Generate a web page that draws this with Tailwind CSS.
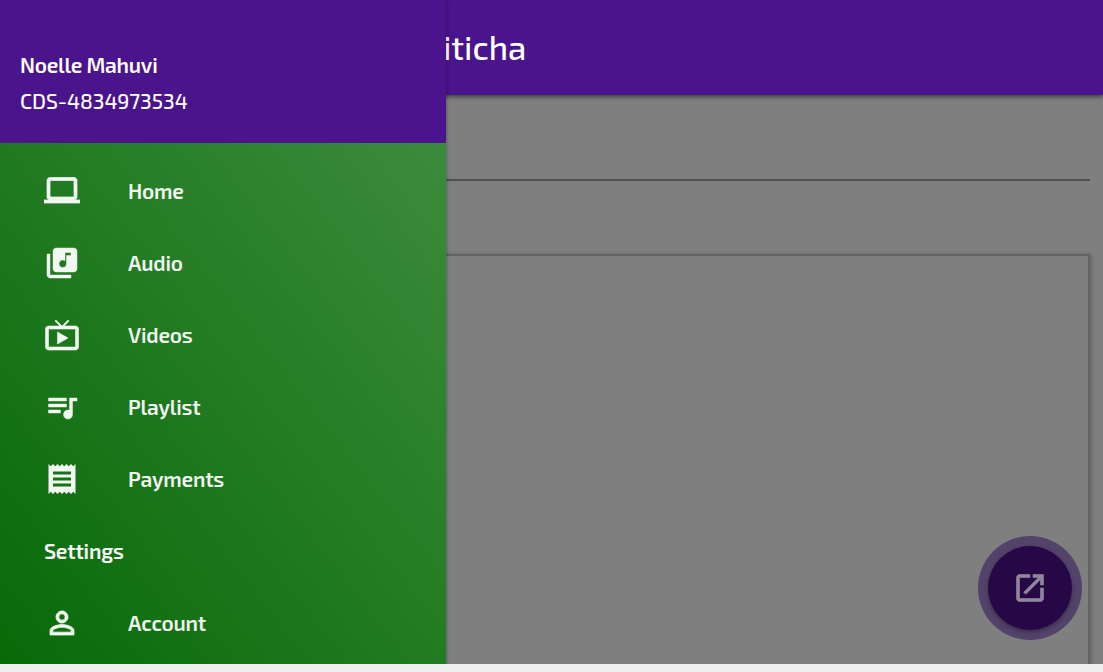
<!DOCTYPE html>
<html lang="en">
<head>
  <meta charset="UTF-8" />
  <title>Miticha</title>
  <meta name="viewport" content="width=device-width, initial-scale=1" />
  <script src="https://cdn.jsdelivr.net/npm/@tailwindcss/browser@4"></script>
</head>
<body class="bg-[#efefef] overflow-hidden font-['Exo_2','Noto_Sans',sans-serif]">

  <div class="relative h-[664px] overflow-hidden bg-[#7f7f7f]">

    <!-- App bar -->
    <header class="relative flex h-[95px] items-center bg-[#4a148c] pl-[443px] shadow-[0_2px_4px_rgba(0,0,0,0.5)]">
      <h1 class="text-[33px] font-medium leading-none text-white">iticha</h1>
    </header>

    <!-- Page content -->
    <main class="pr-[13px]">
      <div class="h-[86px] border-b-2 border-[#505050]"></div>
      <div class="mt-[73px] h-[430px] border-2 border-[#636363] shadow-[1px_1px_4px_rgba(0,0,0,0.3)]"></div>
    </main>

    <!-- Floating button -->
    <button class="absolute left-[978px] top-[536px] flex size-[104px] items-center justify-center rounded-full bg-[#53436a]">
      <span class="flex size-[84px] items-center justify-center rounded-full bg-[#260846] shadow-[0_2px_4px_rgba(0,0,0,0.35)]">
        <svg class="size-9 fill-[#92869f] stroke-[#92869f] stroke-[0.4]" viewBox="0 0 24 24"><path d="M19 19H5V5h7V3H5c-1.11 0-2 .9-2 2v14c0 1.1.89 2 2 2h14c1.1 0 2-.9 2-2v-7h-2v7zM14 3v2h3.59l-9.83 9.83 1.41 1.41L19 6.41V10h2V3h-7z"/></svg>
      </span>
    </button>

    <!-- Side drawer -->
    <aside class="absolute left-0 top-0 flex h-[664px] w-[446px] flex-col bg-[#4a148c] text-[21px] font-semibold leading-[36px] tracking-[-0.2px] text-[#f2f7f2] shadow-[0_0_4px_rgba(0,0,0,0.4)]">
      <div class="h-[143px] shrink-0 pl-5 pt-[47px] text-white">
        <p class="tracking-[-0.25px]">Noelle Mahuvi</p>
        <p class="font-medium tracking-[-0.05px]">CDS-4834973534</p>
      </div>

      <nav class="grow bg-linear-[52deg] from-[#076a07] to-[#3c8b3c] pt-3 pl-11">
        <a class="flex h-[72px] items-center gap-12">
          <svg class="size-9 fill-current stroke-current stroke-[0.5]" viewBox="0 0 24 24"><path d="M20 18c1.1 0 1.99-.9 1.99-2L22 5c0-1.1-.9-2-2-2H4c-1.1 0-2 .9-2 2v11c0 1.1.9 2 2 2H0v2h24v-2h-4zM4 5h16v11H4V5z"/></svg>
          <span>Home</span>
        </a>
        <a class="flex h-[72px] items-center gap-12">
          <svg class="size-9 fill-current stroke-current stroke-[0.3]" viewBox="0 0 24 24"><path d="M20 2H8c-1.1 0-2 .9-2 2v12c0 1.1.9 2 2 2h12c1.1 0 2-.9 2-2V4c0-1.1-.9-2-2-2zm-2 5h-3v5.5c0 1.38-1.12 2.5-2.5 2.5S10 13.88 10 12.5s1.12-2.5 2.5-2.5c.57 0 1.08.19 1.5.51V5h4v2zM4 6H2v14c0 1.1.9 2 2 2h14v-2H4V6z"/></svg>
          <span>Audio</span>
        </a>
        <a class="flex h-[72px] items-center gap-12">
          <svg class="size-9 fill-current stroke-current stroke-[0.4]" viewBox="0 0 24 24"><path d="M21 6h-7.59l3.29-3.29L16 2l-4 4-4-4-.7.71L10.59 6H3c-1.1 0-2 .89-2 2v12c0 1.1.9 2 2 2h18c1.1 0 2-.9 2-2V8c0-1.11-.9-2-2-2zm0 14H3V8h18v12zM9 10v8l7-4z"/></svg>
          <span>Videos</span>
        </a>
        <a class="flex h-[72px] items-center gap-12">
          <svg class="size-9 fill-current stroke-current stroke-[0.3]" viewBox="0 0 24 24"><path d="M15 6H3v2h12V6zm0 4H3v2h12v-2zM3 16h8v-2H3v2zM17 6v8.18c-.31-.11-.65-.18-1-.18-1.66 0-3 1.34-3 3s1.34 3 3 3 3-1.34 3-3V8h3V6h-5z"/></svg>
          <span>Playlist</span>
        </a>
        <a class="flex h-[72px] items-center gap-12">
          <svg class="size-9 fill-current" viewBox="0 0 24 24"><path d="M18 17H6v-2h12v2zm0-4H6v-2h12v2zm0-4H6V7h12v2zM3 22l1.500-1.500L6 22l1.500-1.500L9 22l1.500-1.500L12 22l1.500-1.500L15 22l1.500-1.500L18 22l1.500-1.500L21 22V2l-1.500 1.500L18 2l-1.500 1.500L15 2l-1.500 1.500L12 2l-1.500 1.500L9 2 7.500 3.500 6 2 4.500 3.500 3 2v20z"/></svg>
          <span>Payments</span>
        </a>
        <p class="flex h-[72px] items-center text-white">Settings</p>
        <a class="flex h-[72px] items-center gap-12">
          <svg class="size-9 fill-current stroke-current stroke-[0.5]" viewBox="0 0 24 24"><path d="M12 5.900c1.160 0 2.100.940 2.100 2.100s-.940 2.100-2.100 2.100S9.900 9.160 9.900 8s.940-2.100 2.100-2.100m0 9c2.970 0 6.100 1.460 6.100 2.100v1.100H5.900V17c0-.640 3.130-2.100 6.100-2.100M12 4C9.790 4 8 5.790 8 8s1.790 4 4 4 4-1.790 4-4-1.790-4-4-4zm0 9c-2.670 0-8 1.340-8 4v3h16v-3c0-2.660-5.330-4-8-4z"/></svg>
          <span>Account</span>
        </a>
      </nav>
    </aside>
  </div>

</body>
</html>
